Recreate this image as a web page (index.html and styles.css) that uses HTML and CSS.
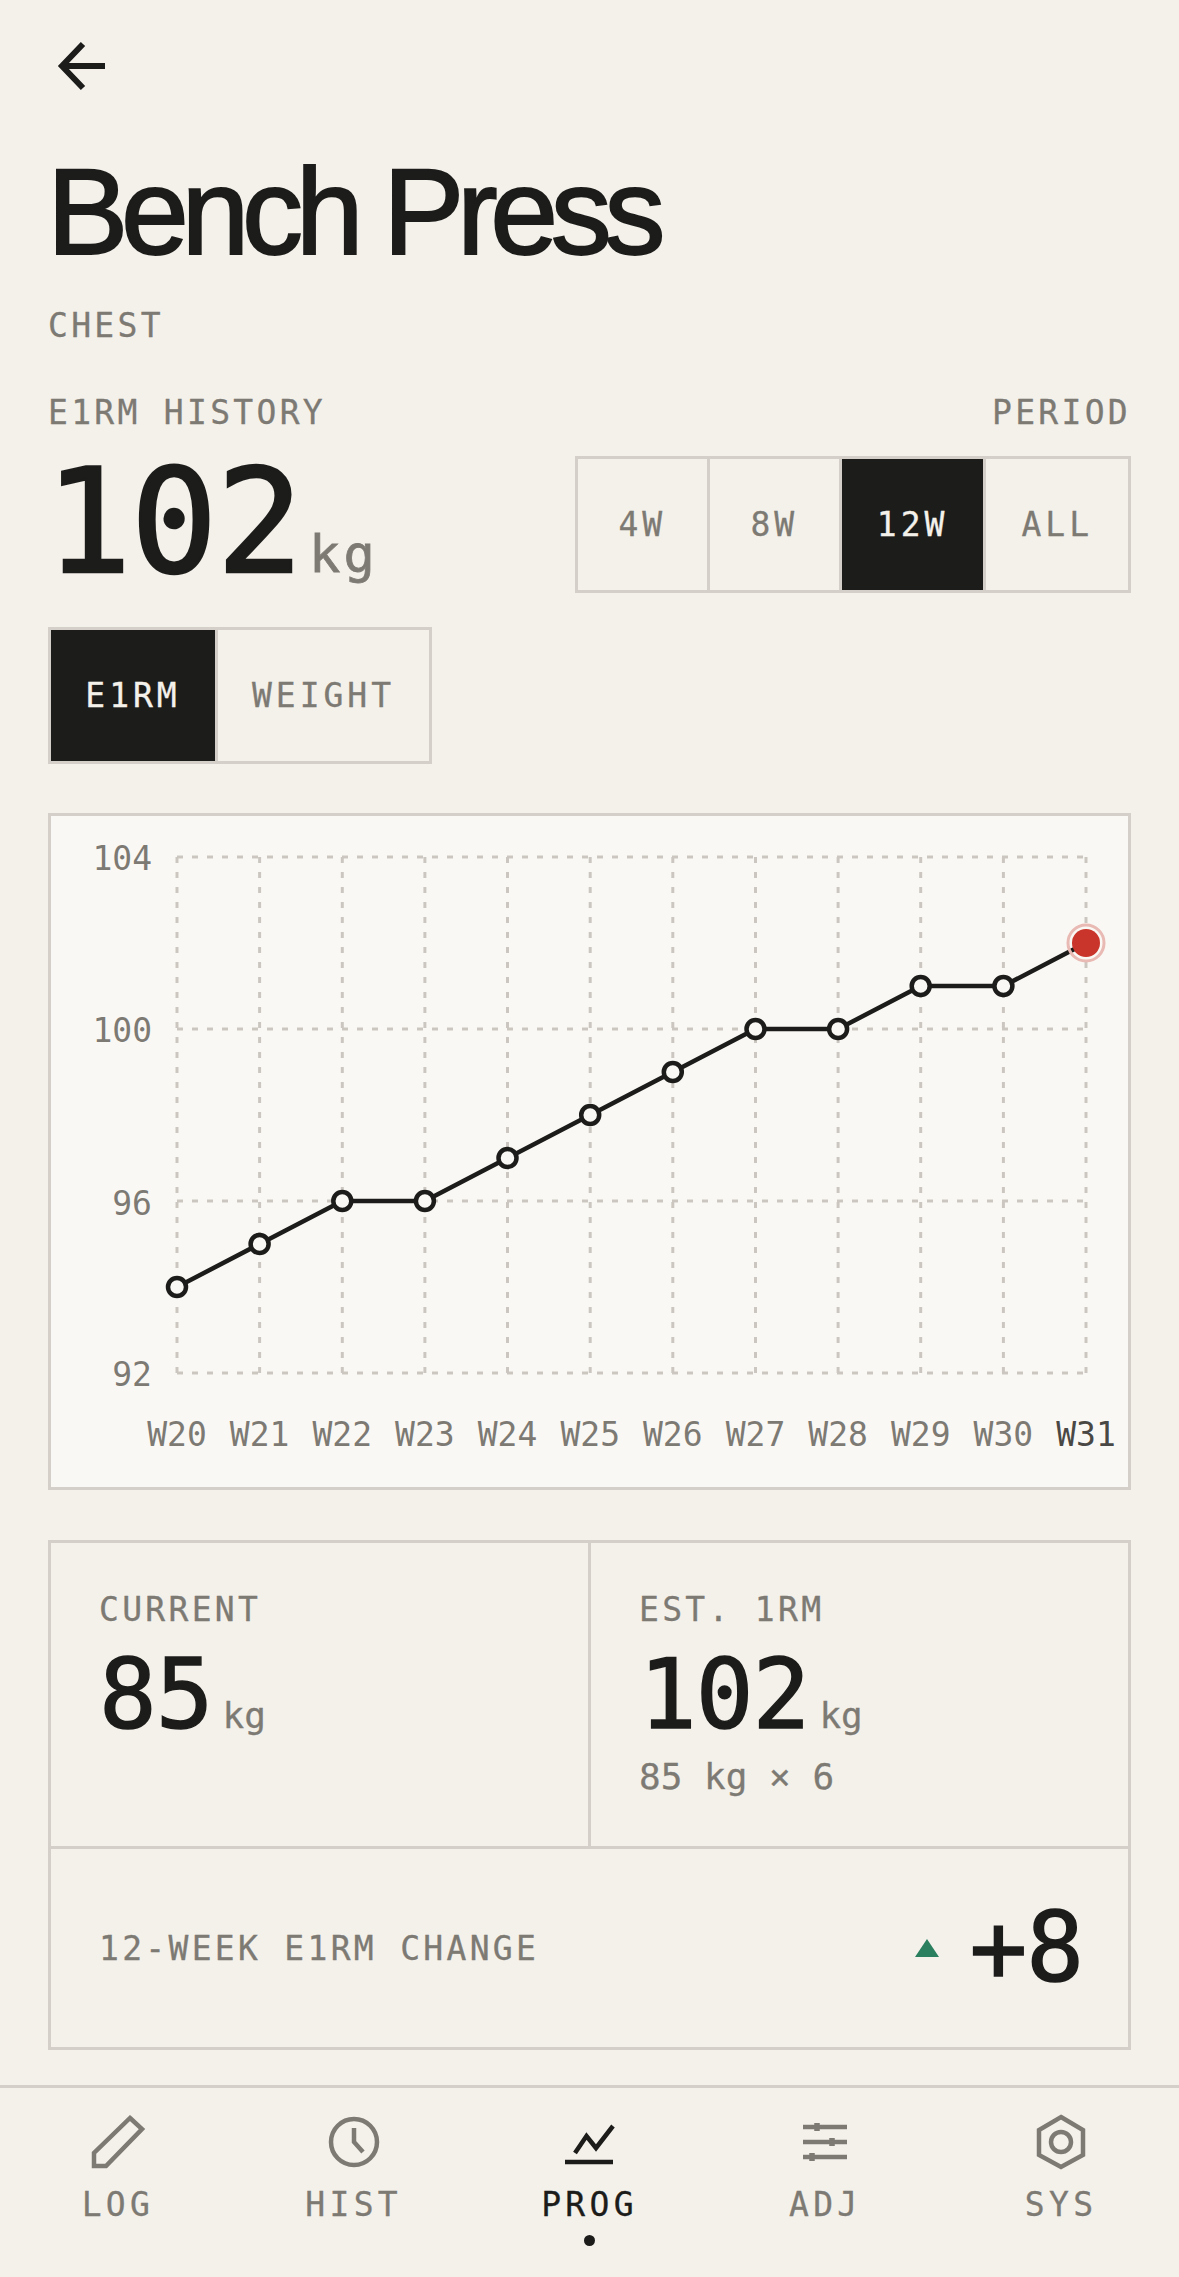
FILE: index.html
```html
<!DOCTYPE html>
<html lang="en">
<head>
<meta charset="utf-8">
<title>Bench Press</title>
<link rel="stylesheet" href="styles.css">
</head>
<body>
<main class="page">
  <svg class="back" viewBox="0 0 60 60" aria-label="Back"><path d="M57 30H14M35 8 14 30 35 52"/></svg>
  <h1 class="title">Bench Press</h1>
  <div class="label chest">CHEST</div>

  <section class="summary">
    <div class="summary-left">
      <div class="label">E1RM HISTORY</div>
      <div class="hero"><span class="hero-num">102</span><span class="hero-unit">kg</span></div>
    </div>
    <div class="summary-right">
      <div class="label">PERIOD</div>
      <div class="seg seg-period">
        <div class="seg-item">4W</div>
        <div class="seg-item">8W</div>
        <div class="seg-item on">12W</div>
        <div class="seg-item">ALL</div>
      </div>
    </div>
  </section>

  <div class="seg seg-metric">
    <div class="seg-item on">E1RM</div>
    <div class="seg-item">WEIGHT</div>
  </div>

  <section class="chart-card">
    <svg class="chart" viewBox="0 0 1077 671">
      <g class="grid">
        <path d="M126 41H1035M126 213H1035M126 385H1035M126 557H1035"/>
        <path d="M126 41V557M208.6 41V557M291.3 41V557M373.9 41V557M456.5 41V557M539.2 41V557M621.8 41V557M704.5 41V557M787.1 41V557M869.7 41V557M952.4 41V557M1035 41V557"/>
      </g>
      <g class="ylab">
        <text x="101" y="54">104</text>
        <text x="101" y="226">100</text>
        <text x="101" y="399">96</text>
        <text x="101" y="570">92</text>
      </g>
      <g class="xlab">
        <text x="126" y="630">W20</text>
        <text x="208.6" y="630">W21</text>
        <text x="291.3" y="630">W22</text>
        <text x="373.9" y="630">W23</text>
        <text x="456.5" y="630">W24</text>
        <text x="539.2" y="630">W25</text>
        <text x="621.8" y="630">W26</text>
        <text x="704.5" y="630">W27</text>
        <text x="787.1" y="630">W28</text>
        <text x="869.7" y="630">W29</text>
        <text x="952.4" y="630">W30</text>
        <text class="xlab-now" x="1035" y="630">W31</text>
      </g>
      <polyline class="trend" points="126,471 208.6,428 291.3,385 373.9,385 456.5,342 539.2,299 621.8,256 704.5,213 787.1,213 869.7,170 952.4,170 1035,127"/>
      <g class="pts">
        <circle cx="126" cy="471" r="9"/><circle cx="208.6" cy="428" r="9"/><circle cx="291.3" cy="385" r="9"/><circle cx="373.9" cy="385" r="9"/><circle cx="456.5" cy="342" r="9"/><circle cx="539.2" cy="299" r="9"/><circle cx="621.8" cy="256" r="9"/><circle cx="704.5" cy="213" r="9"/><circle cx="787.1" cy="213" r="9"/><circle cx="869.7" cy="170" r="9"/><circle cx="952.4" cy="170" r="9"/>
      </g>
      <circle class="now-ring" cx="1035" cy="127" r="18"/>
      <circle class="now-dot" cx="1035" cy="127" r="14"/>
    </svg>
  </section>

  <section class="stats">
    <div class="stat">
      <div class="label">CURRENT</div>
      <div class="stat-val"><span class="stat-num">85</span><span class="stat-unit">kg</span></div>
    </div>
    <div class="stat stat-right">
      <div class="label">EST. 1RM</div>
      <div class="stat-val"><span class="stat-num">102</span><span class="stat-unit">kg</span></div>
      <div class="stat-sub">85 kg × 6</div>
    </div>
    <div class="change">
      <div class="label">12-WEEK E1RM CHANGE</div>
      <div class="change-val"><span class="tri"></span><span class="stat-num">+8</span></div>
    </div>
  </section>
</main>

<nav class="nav">
  <div class="nav-item">
    <svg class="nav-icon" viewBox="0 0 60 60"><path d="M42 6 54 17 18 54H6V41Z"/></svg>
    <div class="nav-label">LOG</div>
  </div>
  <div class="nav-item">
    <svg class="nav-icon" viewBox="0 0 60 60"><circle cx="30" cy="30" r="23"/><path d="M30 16V30L39 40"/></svg>
    <div class="nav-label">HIST</div>
  </div>
  <div class="nav-item active">
    <svg class="nav-icon" viewBox="0 0 60 60"><path d="M6 50H54M16 41 27.500 24 37 36 54 14"/></svg>
    <div class="nav-label">PROG</div>
    <div class="nav-dot"></div>
  </div>
  <div class="nav-item">
    <svg class="nav-icon" viewBox="0 0 60 60"><path d="M8 15H52M8 30H52M8 45H52"/><path class="knob" d="M22 11V19M37 26V34M17 41V49"/></svg>
    <div class="nav-label">ADJ</div>
  </div>
  <div class="nav-item">
    <svg class="nav-icon" viewBox="0 0 60 60"><path d="M30 5 52 18V43L30 55 8 43V18Z"/><circle cx="30" cy="30" r="10"/></svg>
    <div class="nav-label">SYS</div>
  </div>
</nav>
</body>
</html>
```
FILE: styles.css
```css
* { box-sizing: border-box; margin: 0; padding: 0; }
html, body { background: #f4f1eb; }
body {
  width: 1179px;
  height: 2277px;
  overflow: hidden;
  font-family: "DejaVu Sans Mono", "Liberation Mono", monospace;
  color: #1c1c1a;
  -webkit-text-stroke: 0.3px currentColor;
}
.page { padding: 36px 48px 0; }

.back { display: block; width: 60px; height: 60px; overflow: visible; }
.back path { fill: none; stroke: #1c1c1a; stroke-width: 6; }

.title {
  margin-top: 50px;
  margin-left: -1px;
  font-family: "Liberation Sans", Arial, sans-serif;
  font-size: 122px;
  font-weight: 400;
  line-height: 132px;
  letter-spacing: -0.06em;
  -webkit-text-stroke: 2px #1c1c1a;
  white-space: nowrap;
}
.label {
  font-size: 33px;
  line-height: 44px;
  letter-spacing: 3.3px;
  color: #7d7a74;
  white-space: nowrap;
}
.chest { margin-top: 26px; }

.summary {
  display: flex;
  justify-content: space-between;
  margin-top: 43px;
}
.summary-right { display: flex; flex-direction: column; align-items: flex-end; }
.hero { display: flex; align-items: baseline; margin-top: 15px; }
.hero-num { font-size: 144px; line-height: 144px; letter-spacing: -1px; margin-left: -3px; -webkit-text-stroke: 2.5px #1c1c1a; }
.hero-unit { font-size: 52px; line-height: 48px; letter-spacing: 3px; color: #7d7a74; margin-left: 7px; -webkit-text-stroke: 0.8px #7d7a74; }

.seg {
  display: inline-flex;
  height: 137px;
  border: 3px solid #d4cfc8;
}
.seg-period { margin-top: 21px; }
.seg-item {
  display: flex;
  align-items: center;
  justify-content: center;
  min-width: 132px;
  padding: 0 35px;
  font-size: 33px;
  letter-spacing: 4px;
  color: #7d7a74;
  border-right: 3px solid #d4cfc8;
}
.seg-item:last-child { border-right: 0; }
.seg-item.on { background: #1c1c1a; color: #f4f1eb; }
.seg-metric { display: flex; width: 384px; margin-top: 33px; }

.chart-card {
  margin-top: 49px;
  height: 677px;
  border: 3px solid #d4cfc8;
  background: #faf8f4;
}
.chart { display: block; width: 1077px; height: 671px; }
.grid path { fill: none; stroke: #cbc7c0; stroke-width: 3; stroke-dasharray: 6 9; }
.ylab text { font-size: 33px; fill: #7d7a74; stroke: none; text-anchor: end; }
.xlab text { font-size: 33px; fill: #7d7a74; text-anchor: middle; }
.xlab .xlab-now { fill: #4a4845; }
.trend { fill: none; stroke: #1c1c1a; stroke-width: 4.5; stroke-linejoin: round; }
.pts circle { fill: #faf8f4; stroke: #1c1c1a; stroke-width: 4.5; }
.now-ring { fill: none; stroke: #e9b9b3; stroke-width: 3; }
.now-dot { fill: #c9352a; }

.stats {
  display: grid;
  grid-template-columns: 537px 1fr;
  grid-template-rows: 306px 198px;
  margin-top: 50px;
  border: 3px solid #d4cfc8;
}
.stat { padding: 45px 48px 0; border-bottom: 3px solid #d4cfc8; }
.stat-right { border-left: 3px solid #d4cfc8; }
.stat-val { display: flex; align-items: baseline; margin-top: 15px; }
.stat-num { font-size: 96px; line-height: 96px; letter-spacing: -1px; -webkit-text-stroke: 1.5px #1c1c1a; }
.stat-unit { font-size: 36px; line-height: 36px; color: #7d7a74; margin-left: 10px; }
.stat-sub { margin-top: 13px; font-size: 36px; line-height: 42px; color: #7d7a74; }
.change {
  grid-column: 1 / 3;
  display: flex;
  align-items: center;
  justify-content: space-between;
  padding: 0 48px;
}
.change .label { margin-top: 2px; }
.change-val { display: flex; align-items: center; margin-right: -3px; }
.tri {
  width: 0;
  height: 0;
  border-left: 12px solid transparent;
  border-right: 12px solid transparent;
  border-bottom: 18px solid #2a7f5f;
  margin-right: 30px;
}

.nav {
  display: grid;
  grid-template-columns: repeat(5, 1fr);
  margin-top: 35px;
  padding-top: 24px;
  border-top: 3px solid #d4cfc8;
}
.nav-item { display: flex; flex-direction: column; align-items: center; color: #7d7a74; }
.nav-icon { display: block; width: 60px; height: 60px; }
.nav-icon path, .nav-icon circle { fill: none; stroke: currentColor; stroke-width: 4.5; }
.nav-icon .knob { stroke-width: 5.5; }
.nav-label { margin-top: 11px; font-size: 33px; line-height: 44px; letter-spacing: 4.3px; }
.active { color: #1c1c1a; }
.nav-dot { width: 11px; height: 11px; margin-top: 8px; border-radius: 50%; background: #1c1c1a; }
```
